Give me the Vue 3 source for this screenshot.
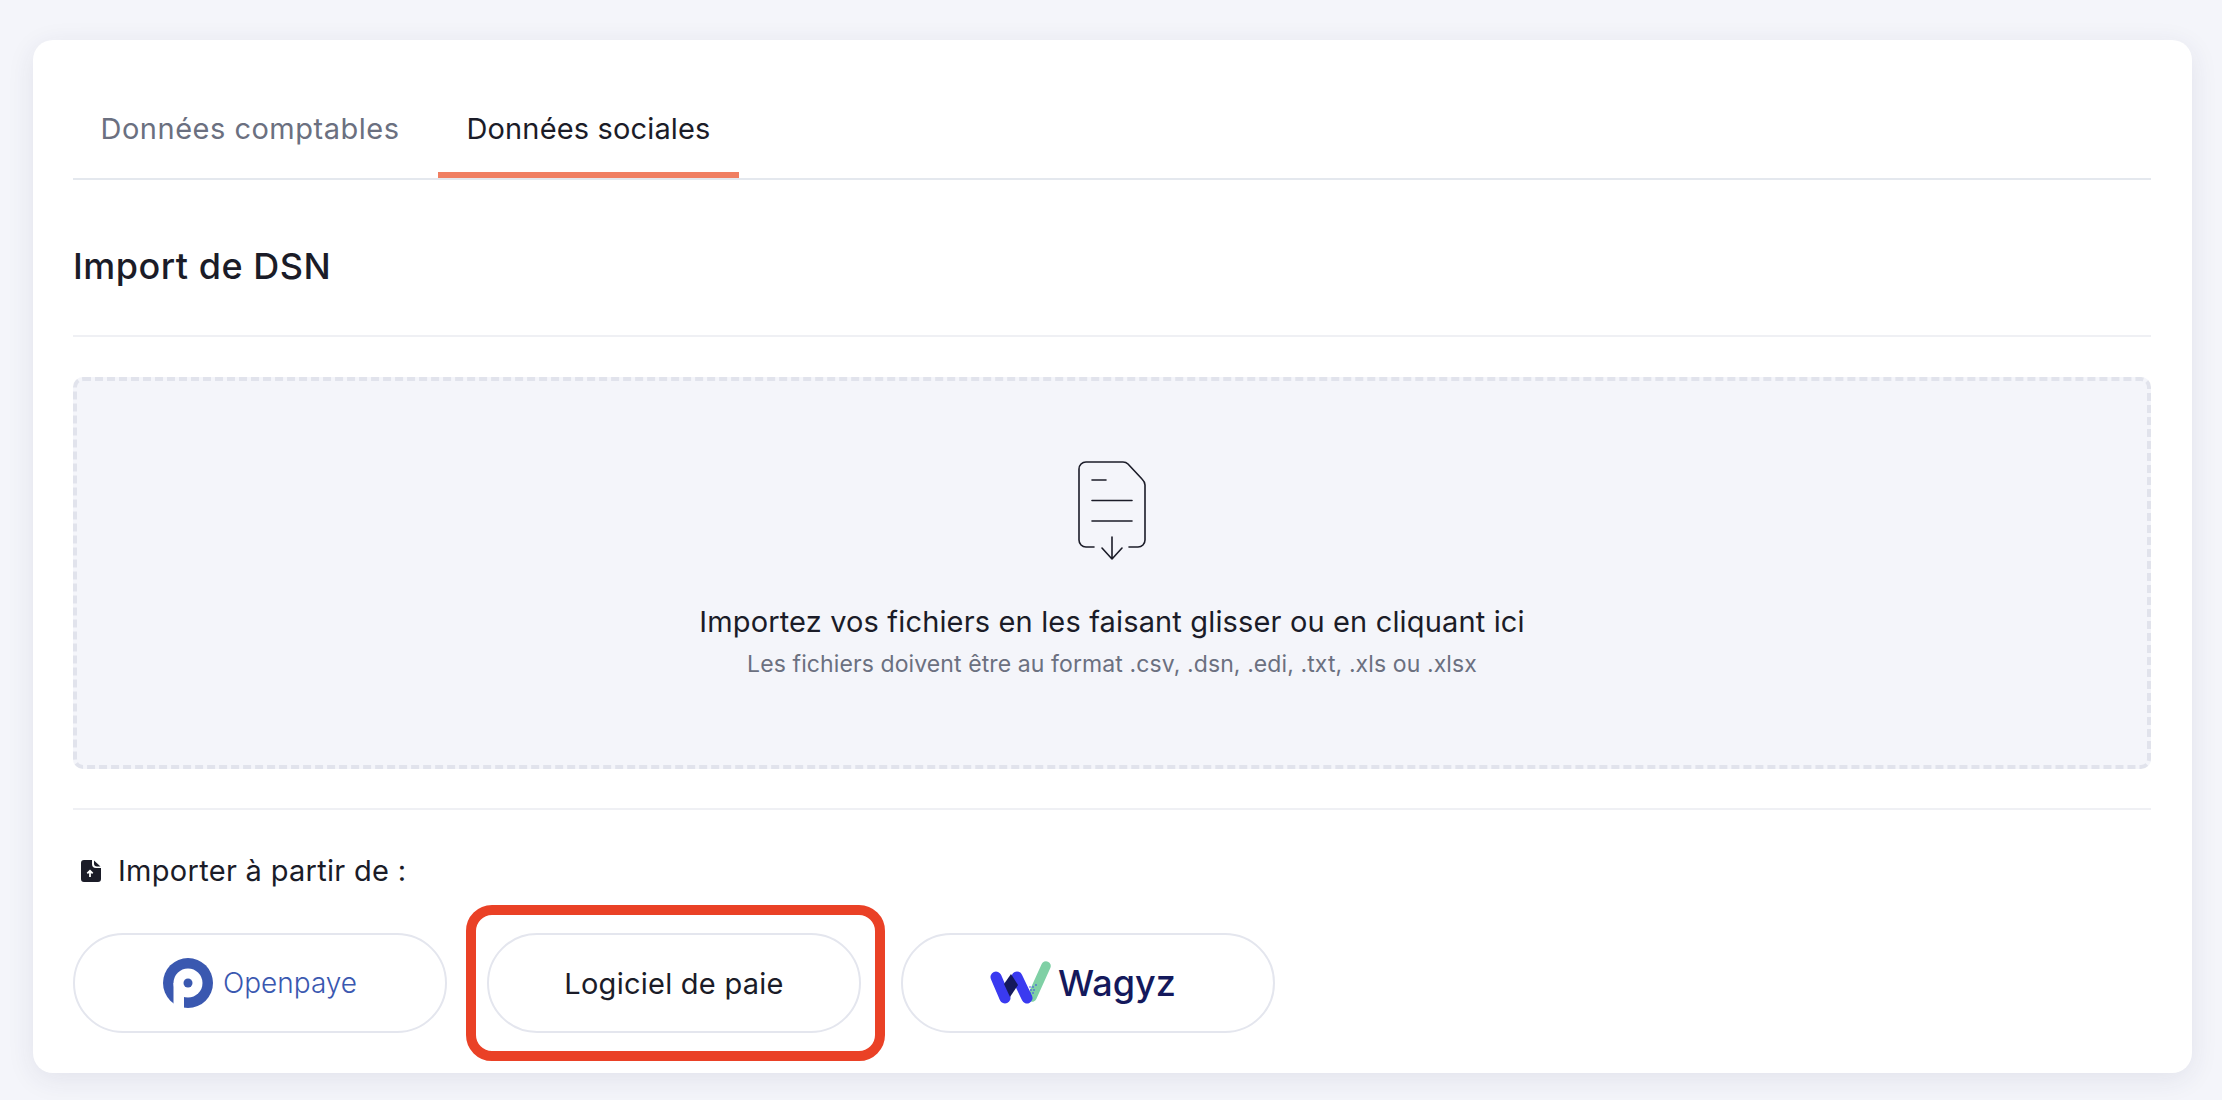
<script setup>
import { ref } from 'vue';

const tabs = ['Données comptables', 'Données sociales'];
const activeTab = ref(1);
</script>

<template>
  <main class="page">
    <section class="card">
      <nav class="tabs">
        <button
          v-for="(tab, i) in tabs"
          :key="tab"
          :class="['tab', { active: activeTab === i }]"
          @click="activeTab = i"
        >{{ tab }}</button>
      </nav>

      <h1 class="title">Import de DSN</h1>

      <div class="dropzone">
        <svg class="file-icon" width="70" height="100" viewBox="0 0 70 100" fill="none" stroke="#1b1c28" stroke-width="1.6" stroke-linecap="round" stroke-linejoin="round">
          <path d="M17 87H9a7 7 0 0 1-7-7V9a7 7 0 0 1 7-7h37q3 0 5 2l14 15q3 3 3 6v55a7 7 0 0 1-7 7h-9"/>
          <path d="M15 20h14M15 40.5h40M15 61h40"/>
          <path d="M35 77v22M25 88l10 11 10-11"/>
        </svg>
        <p class="drop-title">Importez vos fichiers en les faisant glisser ou en cliquant ici</p>
        <p class="drop-sub">Les fichiers doivent être au format .csv, .dsn, .edi, .txt, .xls ou .xlsx</p>
      </div>

      <div class="import-label">
        <svg class="upload-icon" width="20" height="22" viewBox="0 0 20 22">
          <path fill="#1b1c28" d="M3 0h8v4q0 4 4 4h5v11a3 3 0 0 1-3 3H3a3 3 0 0 1-3-3V3a3 3 0 0 1 3-3z"/>
          <path fill="#1b1c28" d="M13 0.5l6.5 6H16q-3 0-3-3z"/>
          <path fill="none" stroke="#fff" stroke-width="1.8" d="M9 17v-6M6.3 13.4L9 10.8l2.7 2.6"/>
        </svg>
        <span>Importer à partir de :</span>
      </div>

      <div class="sources">
        <button class="source">
          <svg width="50" height="50" viewBox="0 0 50 50">
            <circle cx="25" cy="25" r="25" fill="#3a58b0"/>
            <circle cx="25" cy="25" r="14.5" fill="#fff"/>
            <rect x="10.5" y="25" width="10.5" height="25" fill="#fff"/>
            <circle cx="25" cy="25" r="4.5" fill="#3a58b0"/>
          </svg>
          <span class="openpaye">Openpaye</span>
        </button>

        <div class="highlight">
          <button class="source plain">Logiciel de paie</button>
        </div>

        <button class="source wagyz-btn">
          <svg width="62" height="46" viewBox="0 0 62 46" fill="none" stroke-linecap="round">
            <path d="M42 37L56 6" stroke="#7fd0a5" stroke-width="9.5"/>
            <g fill="#3a3af0">
              <circle cx="40" cy="27" r=".8"/><circle cx="43" cy="27" r=".8"/><circle cx="41" cy="30" r=".8"/>
              <circle cx="44" cy="30" r=".8"/><circle cx="40" cy="33" r=".8"/><circle cx="43" cy="33" r=".8"/>
              <circle cx="41" cy="36" r=".8"/><circle cx="46" cy="25" r=".8"/>
            </g>
            <path d="M6 17L15 38" stroke="#3a3af0" stroke-width="11"/>
            <path d="M27 17L37 38" stroke="#3a3af0" stroke-width="11"/>
            <path d="M21 14L28 25L20 37L14 24z" fill="#14195c"/>
          </svg>
          <span class="wagyz">Wagyz</span>
        </button>
      </div>
    </section>
  </main>
</template>

<style scoped>
.page {
  padding: 40px 30px 27px 33px;
  font-family: Inter, "Liberation Sans", sans-serif;
  color: #1b1c28;
}

.card {
  height: 1033px;
  box-sizing: border-box;
  background: #fff;
  border-radius: 20px;
  padding: 0 41px 0 40px;
  box-shadow: 0 6px 28px rgba(40, 45, 90, 0.09);
}

.tabs {
  display: flex;
  gap: 11px;
  height: 140px;
  box-sizing: border-box;
  padding-top: 40px;
  border-bottom: 2px solid #e4e8ee;
}

.tab {
  width: 301px;
  height: 98px;
  padding: 4px 0 0;
  border: none;
  border-bottom: 6px solid transparent;
  background: none;
  font: 400 29px Inter, sans-serif;
  letter-spacing: 0.5px;
  color: #6b7080;
  cursor: pointer;
}

.tab:first-child {
  width: 354px;
}

.tab.active {
  color: #1b1c28;
  letter-spacing: 0.15px;
  border-bottom-color: #f07f62;
}

.title {
  margin: 0;
  height: 157px;
  box-sizing: border-box;
  padding-top: 65px;
  font-size: 36px;
  line-height: 42px;
  font-weight: 500;
  letter-spacing: 0.5px;
  border-bottom: 2px solid #eff0f4;
}

.dropzone {
  margin-top: 40px;
  height: 392px;
  box-sizing: border-box;
  padding-top: 79px;
  border: 4px dashed #e1e3ec;
  border-radius: 10px;
  background: #f4f5fa;
  display: flex;
  flex-direction: column;
  align-items: center;
}

.file-icon {
  display: block;
  margin-bottom: 42px;
  flex: none;
}

.drop-title {
  margin: 0;
  font-size: 29px;
  line-height: 40px;
  letter-spacing: 0.15px;
}

.drop-sub {
  margin: 3px 0 0;
  font-size: 23px;
  line-height: 38px;
  letter-spacing: 0.1px;
  color: #6b7080;
}

.import-label {
  margin-top: 39px;
  padding-top: 50px;
  border-top: 2px solid #eff0f4;
  padding-left: 8px;
  display: flex;
  align-items: center;
  gap: 17px;
  font-size: 29px;
  line-height: 22px;
  letter-spacing: 0.3px;
}

.sources {
  margin-top: 51px;
  display: flex;
  gap: 40px;
}

.source {
  width: 374px;
  height: 100px;
  box-sizing: border-box;
  padding: 0;
  border: 2px solid #e4e6ee;
  border-radius: 50px;
  background: #fff;
  display: flex;
  align-items: center;
  justify-content: center;
  gap: 10px;
  cursor: pointer;
}

.plain {
  font: 400 29px Inter, sans-serif;
  letter-spacing: 0.25px;
  color: #1b1c28;
}

.highlight {
  position: relative;
}

.highlight::after {
  content: "";
  position: absolute;
  inset: -28px -24px -28px -21px;
  border: 10px solid #ea4126;
  border-radius: 26px;
  pointer-events: none;
}

.openpaye {
  font: 300 28px Inter, sans-serif;
  color: #3a58b0;
}

.wagyz {
  font: 500 36px Inter, sans-serif;
  color: #14195c;
}

.wagyz-btn {
  gap: 6px;
  padding-right: 10px;
}
</style>

<style>
body {
  background: #f4f5fa;
}
</style>
